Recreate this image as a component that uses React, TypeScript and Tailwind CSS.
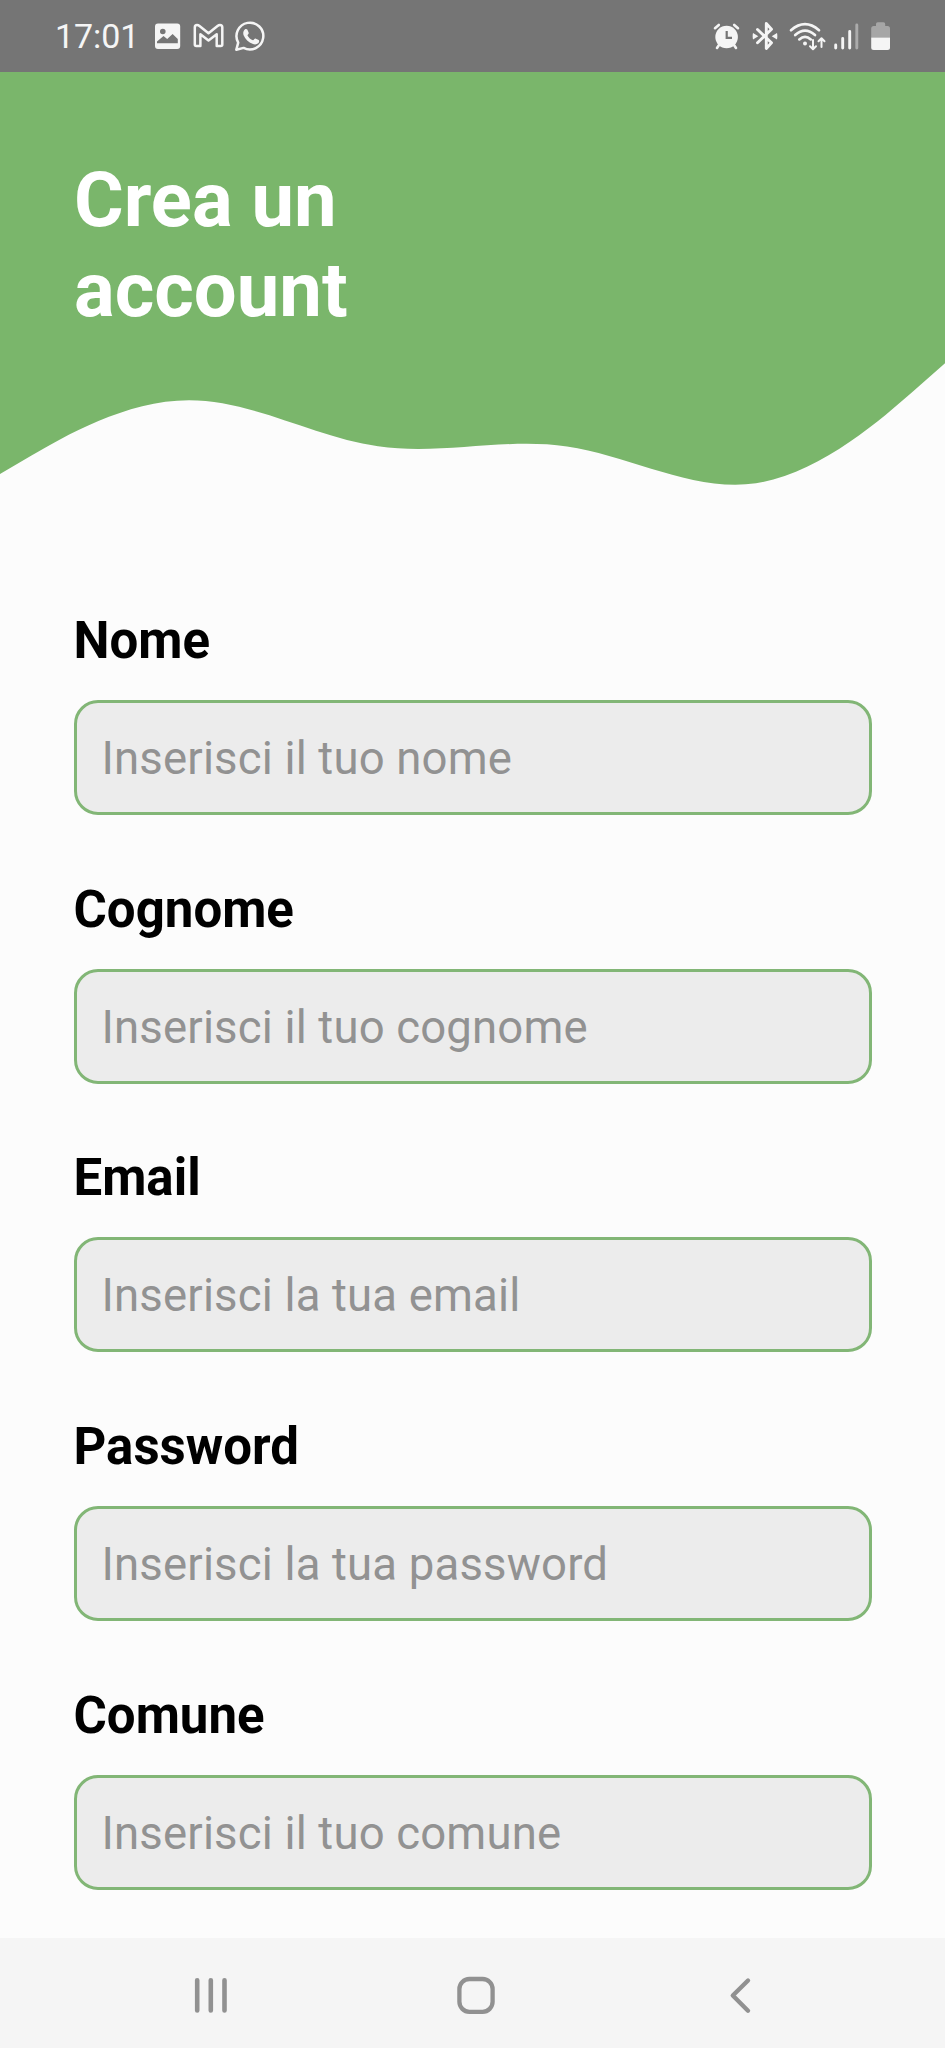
const fields = [
  { id: 'nome', label: 'Nome', placeholder: 'Inserisci il tuo nome', type: 'text' },
  { id: 'cognome', label: 'Cognome', placeholder: 'Inserisci il tuo cognome', type: 'text' },
  { id: 'email', label: 'Email', placeholder: 'Inserisci la tua email', type: 'email' },
  { id: 'password', label: 'Password', placeholder: 'Inserisci la tua password', type: 'password' },
  { id: 'comune', label: 'Comune', placeholder: 'Inserisci il tuo comune', type: 'text' },
];

function StatusBar() {
  return (
    <div className="flex h-[72px] shrink-0 items-center justify-between bg-[#757575] pr-[49px] pl-[55px] text-[#f5f5f5]">
      <div className="flex items-center">
        <span className="w-[95px] text-[34px] leading-[70px] tracking-[-0.1px]">17:01</span>
        {/* gallery */}
        <svg className="ml-[2px]" width="36" height="72" viewBox="152 0 36 72">
          <path
            fill="currentColor"
            fillRule="evenodd"
            d="M158 23.5h19.200a3 3 0 0 1 3 3v19.500a3 3 0 0 1-3 3H158a3 3 0 0 1-3-3V26.500a3 3 0 0 1 3-3zM157 43.300h20.800v-4.200l-5.200-5.200-5.400 5.200-3.700-3.200-6.500 5.600zM162.800 28.700a2.800 2.800 0 1 0 0 5.600 2.800 2.800 0 0 0 0-5.600z"
          />
        </svg>
        {/* mail */}
        <svg width="42" height="72" viewBox="188 0 42 72">
          <path
            fill="none"
            stroke="currentColor"
            strokeWidth="2.500"
            strokeLinejoin="round"
            d="M194.800 27.500Q194.800 25 197 25Q198.300 25 199.500 26L208.500 33.200L217.500 26Q218.700 25 220 25Q222.300 25 222.300 27.500V44.500Q222.300 46 220.800 46H216.700V34.300L208.500 40.500L200.400 34.300V46H196.300Q194.800 46 194.800 44.500Z"
          />
        </svg>
        {/* chat */}
        <svg width="42" height="72" viewBox="230 0 42 72">
          <path
            fill="none"
            stroke="currentColor"
            strokeWidth="2.500"
            strokeLinejoin="round"
            d="M236.300 49.800L238.200 42.600A13.400 13.400 0 1 1 243.600 47.900Z"
          />
          <path
            fill="currentColor"
            d="M244.800 29.400c.6-.6 2-.7 2.500.2l1.500 3.300c.3.700-1.200 1.900-1.300 2.500 1.200 2.300 3.100 3.900 5.500 4.900.7-.1 1.700-2 2.400-1.800l3.300 1.600c.8.5.4 2.200-.2 2.900-1.400 1.500-3.700 1.700-5.500 1-4.700-1.700-7.700-4.700-9.400-8.700-.7-2-.4-4.400 1.200-5.900z"
          />
        </svg>
      </div>
      <div className="flex items-center">
        {/* alarm */}
        <svg width="38" height="72" viewBox="708 0 38 72">
          <g stroke="currentColor" strokeLinecap="round" strokeWidth="2.600" fill="none">
            <path d="M715 28.200L718.800 24.900M738 28.200L734.200 24.900M719 45L717 48M734 45L736 48" />
          </g>
          <circle cx="726.600" cy="37" r="11.300" fill="currentColor" />
          <path d="M726.700 31V37.800H732" fill="none" stroke="#757575" strokeWidth="2.200" />
        </svg>
        {/* bluetooth */}
        <svg width="40" height="72" viewBox="746 0 40 72">
          <path
            d="M757.500 29.500L771.500 42.800L766.300 48.500V23.500L771.500 29.200L757.500 42.800"
            fill="none"
            stroke="currentColor"
            strokeWidth="2.900"
            strokeLinecap="round"
            strokeLinejoin="round"
          />
          <path d="M753 33L758.300 36.200L753 39.400Q752.300 36.200 753 33ZM777 33L771.700 36.200L777 39.400Q777.700 36.200 777 33Z" fill="currentColor" />
        </svg>
        {/* wifi */}
        <svg width="44" height="72" viewBox="786 0 44 72">
          <g fill="none" stroke="currentColor" strokeLinecap="round">
            <path strokeWidth="2.700" d="M791 30.200Q805 18.200 819 30.200M795.200 35Q805 26.200 815 35M799.300 39.400Q805 34.200 810.800 39.400" />
            <path strokeWidth="2" strokeLinejoin="round" d="M813 40V49M810 46.300L813 49.300L816 46.300M821.500 47V38.500M818.500 41.300L821.500 38.300L824.500 41.300" />
          </g>
          <circle cx="805" cy="43.500" r="2" fill="currentColor" />
        </svg>
        {/* signal */}
        <svg width="36" height="72" viewBox="830 0 36 72">
          <g stroke="currentColor" strokeWidth="2.900" strokeLinecap="round">
            <path d="M835.700 45V48M842.700 38.500V48M849.700 31.500V48" />
            <path opacity="0.420" d="M856.800 25V48" />
          </g>
        </svg>
        {/* battery */}
        <svg width="30" height="72" viewBox="866 0 30 72">
          <path fill="#a6a6a6" d="M871.200 37.500V28.500Q871.200 26 873.700 26H876V24Q876 22.300 877.700 22.300H883.500Q885.200 22.300 885.200 24V26H887.500Q890 26 890 28.500V37.500Z" />
          <path fill="currentColor" d="M871.200 37.500H890V47.500Q890 50 887.500 50H873.700Q871.200 50 871.200 47.500Z" />
        </svg>
      </div>
    </div>
  );
}

function Header() {
  return (
    <header className="grid h-[428px] shrink-0">
      <svg className="col-start-1 row-start-1" width="945" height="428" viewBox="0 72 945 428">
        <path
          fill="#7ab66b"
          d="M0 72V474L31.500 455.600C63 437.100 126 400.200 189 400.200C252 400.200 315 437.100 378 446.300C441 455.600 504 437.100 567 446.400C630 455.600 693 492.400 756 483.200C819 474 882 418.600 913.500 391L945 363.300V72Z"
        />
      </svg>
      <h1 className="col-start-1 row-start-1 w-[400px] pt-[84px] pl-[74px] text-[76px] leading-[89.500px] font-bold text-white">
        Crea un account
      </h1>
    </header>
  );
}

function NavBar() {
  return (
    <nav className="flex h-[110px] shrink-0 items-center justify-between bg-[#f5f5f5] pr-[183px] pl-[189px] text-[#919191]">
      <svg width="44" height="110" viewBox="189 1938 44 110">
        <path d="M197.200 1980.300V2010.500M210.800 1980.300V2010.500M224.500 1980.300V2010.500" stroke="currentColor" strokeWidth="4.600" strokeLinecap="round" />
      </svg>
      <svg width="44" height="110" viewBox="453.500 1938 44 110">
        <rect x="458.900" y="1979" width="33.200" height="32.800" rx="10" fill="none" stroke="currentColor" strokeWidth="4.300" />
      </svg>
      <svg width="44" height="110" viewBox="718 1938 44 110">
        <path d="M748 1980.500L732.800 1995.500L748 2010.700" fill="none" stroke="currentColor" strokeWidth="4.400" strokeLinecap="round" strokeLinejoin="round" />
      </svg>
    </nav>
  );
}

export default function App() {
  return (
    <div className="flex h-[2048px] w-[945px] flex-col overflow-hidden bg-[#fcfcfc] font-['Roboto',sans-serif]">
      <StatusBar />
      <Header />
      <form className="flex flex-1 flex-col gap-[53.700px] px-[73.500px] pt-[100px]">
        {fields.map((f) => (
          <div key={f.id} className="flex h-[215px] shrink-0 flex-col justify-between">
            <label htmlFor={f.id} className="pt-[11px] text-[51px] leading-[60px] font-bold text-black">
              {f.label}
            </label>
            <input
              id={f.id}
              type={f.type}
              placeholder={f.placeholder}
              className="h-[115px] w-full rounded-[24px] border-[3px] border-[#82b676] bg-[#ececec] px-[25px] pt-[2px] text-[45.500px] tracking-[0.170px] text-black outline-none placeholder:text-[#929292]"
            />
          </div>
        ))}
      </form>
      <NavBar />
    </div>
  );
}
